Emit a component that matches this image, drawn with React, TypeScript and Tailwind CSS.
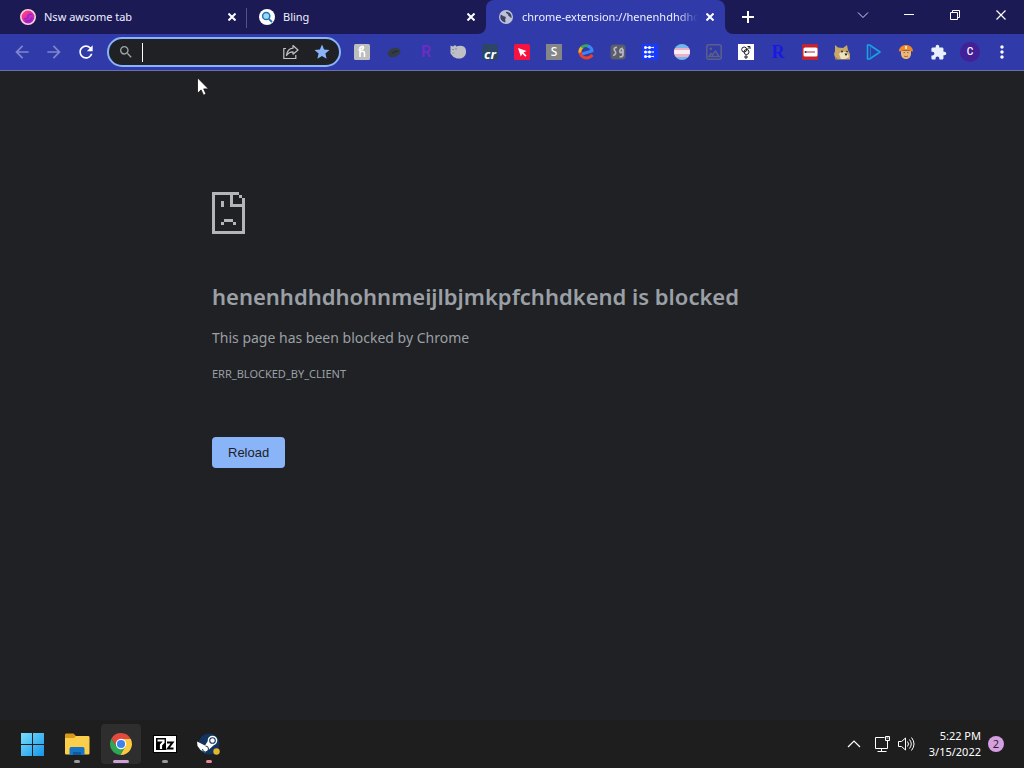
import type { ReactNode } from "react";
import {
  MdArrowBack,
  MdArrowForward,
  MdExtension,
  MdMoreVert,
  MdRefresh,
  MdSearch,
  MdStar,
} from "react-icons/md";

const svgProps = { width: 16, height: 16, viewBox: "0 0 16 16", fill: "none" };

function Cross({ size = 8, width = 2 }: { size?: number; width?: number }) {
  return (
    <svg width={size} height={size} viewBox={`0 0 ${size} ${size}`} stroke="#fff" strokeWidth={width}>
      <path d={`M0.5 0.5 L${size - 0.5} ${size - 0.5} M${size - 0.5} 0.5 L0.5 ${size - 0.5}`} />
    </svg>
  );
}

function GlowIcon() {
  return (
    <svg {...svgProps}>
      <defs>
        <linearGradient id="glow" x1="0" y1="0" x2="1" y2="1">
          <stop offset="0.2" stopColor="#ff3d8b" />
          <stop offset="1" stopColor="#8a1be0" />
        </linearGradient>
      </defs>
      <circle cx="8" cy="8" r="7.2" fill="url(#glow)" stroke="#fbd3d8" strokeWidth="1.6" />
      <path d="M4 9.5c2 .8 4-.2 4-2s2-3 4-2M5 11.8c3 .6 6-.6 7-3" stroke="#8a20d8" strokeWidth="1.3" />
    </svg>
  );
}

function BlingIcon() {
  return (
    <svg {...svgProps}>
      <circle cx="8" cy="8" r="8" fill="#fff" />
      <circle cx="7.2" cy="7" r="3.6" fill="#9ed8f5" stroke="#1c79b5" strokeWidth="1.5" />
      <path d="M9.8 9.8l3.2 3.2" stroke="#1c79b5" strokeWidth="1.8" />
    </svg>
  );
}

function GlobeIcon() {
  return (
    <svg {...svgProps} width={14} height={14}>
      <circle cx="8" cy="8" r="8" fill="#bcc3d6" />
      <path d="M2 5.5c1.500-.5 2.500 2 4.500 2 1.500 0 1.500 2 .5 3l.5 3.500C4 14 1.500 11 1.500 8zM8 2c-.5 1.500 1 2 2 2.500s0 2 1.500 2.500 1.500 2 2.800 2C15 5 12 2 8 2z" fill="#3c4468" />
    </svg>
  );
}

const extensions: { name: string; icon: ReactNode }[] = [
  {
    name: "Honey",
    icon: (
      <svg {...svgProps}>
        <rect width="16" height="16" rx="1.5" fill="#bebebe" />
        <path d="M6 3v10M6 9c1-2.500 4.500-2.500 4.500.5V13M4.500 5.500C6 6 9.500 5.500 9.500 3.500 9.500 2 7 2.500 6 4" stroke="#fff" strokeWidth="1.6" />
      </svg>
    ),
  },
  {
    name: "Leaf",
    icon: (
      <svg {...svgProps}>
        <ellipse cx="8" cy="8.5" rx="6.5" ry="4.5" transform="rotate(-18 8 8.5)" fill="#343c43" />
        <path d="M6 9.500c2-2 4-2.500 6-2.500" stroke="#262e32" strokeWidth="1.5" />
      </svg>
    ),
  },
  {
    name: "Purple R",
    icon: <span className="font-[Roboto,sans-serif] text-[16px] leading-4 font-medium text-[#702bc5]">R</span>,
  },
  {
    name: "Piggy",
    icon: (
      <svg {...svgProps}>
        <path d="M0.500 1.500l2.500 1L5 1l1.500 1.500c4.500-1.500 9-.5 9.500 4s-2 6.500-3 7l-2 1H7L3.500 13 0.500 9.500z" fill="#bfc0c6" />
        <path d="M2.500 5.500h1M5.500 5h1" stroke="#505468" />
        <path d="M2.500 9h2" stroke="#969aa8" />
      </svg>
    ),
  },
  {
    name: "cr",
    icon: (
      <span className="flex h-4 w-4 items-end justify-center rounded-sm bg-[#2b4765]">
        <span className="font-['Noto_Sans',sans-serif] text-[13px] leading-3 font-bold text-white italic">cr</span>
      </span>
    ),
  },
  {
    name: "Custom Cursor",
    icon: (
      <svg {...svgProps}>
        <rect width="16" height="16" rx="1.5" fill="#f5143f" />
        <path d="M4 4l8.500 3-3 1.500 3 3-1.200 1.200-3-3L6.800 12.500z" fill="#fff" />
      </svg>
    ),
  },
  {
    name: "S",
    icon: (
      <span className="flex h-4 w-4 items-center justify-center bg-[#858688] font-['Noto_Sans',sans-serif] text-[12px] leading-4 font-medium text-white">
        S
      </span>
    ),
  },
  {
    name: "Browser",
    icon: (
      <svg {...svgProps} strokeWidth="3">
        <path d="M2 9A6.200 6.200 0 0 1 4.500 3" stroke="#f1b51e" />
        <path d="M3.500 3.500A6.300 6.300 0 0 1 11.500 2.800" stroke="#35a853" />
        <path d="M9.500 2C13 3 14 5 14 7L4 10" stroke="#3b86f2" />
        <path d="M2 8.500c1 5.500 8 7.500 12.500 2.500" stroke="#e8402e" />
      </svg>
    ),
  },
  {
    name: "Stylus",
    icon: (
      <svg {...svgProps}>
        <rect x="0.5" y="0.5" width="15" height="15" rx="3" fill="#5b5d6b" />
        <path d="M7 3.500c-3-.5-3.500 2-2 3.500s.500 4-2 4.500M13 4.500c-3-.5-4 3-2.500 4s2.500-2 2.500-3.500v6c-.5 2-2 2-3.500 1.500" stroke="#b9bac0" strokeWidth="1.7" />
      </svg>
    ),
  },
  {
    name: "Slots",
    icon: (
      <svg {...svgProps}>
        <rect width="16" height="16" rx="1" fill="#163bff" />
        <path d="M4 3.500h8M4 8h8M4 12.500h8" stroke="#c9d8ff" />
        <g fill="#fff">
          <circle cx="3.5" cy="3.5" r="1.5" /><circle cx="7.5" cy="3.5" r="1.5" /><path d="M10 3.500l1.500-1v2z" />
          <circle cx="3.5" cy="8" r="1.5" /><circle cx="7.5" cy="8" r="1.5" /><path d="M10 8l1.500-1v2z" />
          <circle cx="3.5" cy="12.5" r="1.5" /><circle cx="7.5" cy="12.5" r="1.5" /><path d="M10 12.500l1.500-1v2z" />
        </g>
      </svg>
    ),
  },
  {
    name: "Flag",
    icon: (
      <svg {...svgProps}>
        <clipPath id="flag"><circle cx="8" cy="8" r="8" /></clipPath>
        <g clipPath="url(#flag)">
          <path d="M0 0h16v16H0z" fill="#71b7ed" />
          <path d="M0 4h16v9H0z" fill="#edb0c9" />
          <path d="M0 6h16v4H0z" fill="#f7edf2" />
        </g>
      </svg>
    ),
  },
  {
    name: "Image",
    icon: (
      <svg {...svgProps} stroke="#5b6088" strokeWidth="1.5">
        <rect x="0.8" y="0.8" width="14.4" height="14.4" rx="2" />
        <path d="M3 12.500h10L9.500 7 6.500 11 5 9.500z" />
        <circle cx="4.8" cy="4.8" r="0.6" />
      </svg>
    ),
  },
  {
    name: "Symbols",
    icon: (
      <svg {...svgProps} stroke="#20212a">
        <rect width="16" height="16" fill="#fff" stroke="none" />
        <circle cx="6.2" cy="5.500" r="2.500" />
        <circle cx="8.500" cy="8" r="2.500" />
        <path d="M8.500 6l3-3M9.500 2.500h2.500v2.500M8 10.500V15M6 13h4" />
      </svg>
    ),
  },
  {
    name: "Blue R",
    icon: <span className="font-['Liberation_Serif',serif] text-[18px] leading-4 font-bold text-[#1919e6]">R</span>,
  },
  {
    name: "Ticket",
    icon: (
      <svg {...svgProps}>
        <rect width="16" height="16" rx="1" fill="#c22432" />
        <rect x="1.5" y="3.5" width="14" height="9" rx="1.5" fill="#fff" />
        <path d="M3 8h10" stroke="#a52a40" />
        <circle cx="3.5" cy="8" r="1" fill="#403040" />
      </svg>
    ),
  },
  {
    name: "Doge",
    icon: (
      <svg {...svgProps}>
        <path d="M1 1l3 2.500L9 4l4-3 1 5 2 4v5.500H1.500L0 10 1 7z" fill="#c8a866" />
        <path d="M5 10c2-3 7-3 9 0l1 3-4 2H7z" fill="#eee2c2" />
        <path d="M1 12c1 2 3 3.500 6 3.500H2z" fill="#8d7549" />
        <circle cx="8" cy="7.5" r="0.9" fill="#25201b" />
        <circle cx="13" cy="7.5" r="0.8" fill="#25201b" />
        <path d="M10.500 9.500h3l-1 2h-1z" fill="#25201b" />
      </svg>
    ),
  },
  {
    name: "Player",
    icon: (
      <svg {...svgProps} strokeLinejoin="round">
        <path d="M1.500 1h2L14 8 3.500 15h-2z" stroke="#16a4e3" strokeWidth="1.6" />
        <path d="M4.500 2v12" stroke="#1676c9" />
      </svg>
    ),
  },
  {
    name: "Helmet",
    icon: (
      <svg {...svgProps}>
        <path d="M3 7h10v3c0 3-2.500 5-5 5s-5-2-5-5z" fill="#e9b878" />
        <path d="M1 7.500C1 3.500 4 1 8 1s7 2.500 7 6.500C12 6 4 6 1 7.500z" fill="#f08a28" />
        <path d="M7 2h2v3H7z" fill="#ffe2a4" />
        <path d="M5.500 8.500h1.500M9 8.500h1.500M6 12c1 .8 3 .8 4 0" stroke="#b0683a" />
      </svg>
    ),
  },
  { name: "Extensions", icon: <MdExtension size={17} className="text-[#eaf0ff]" /> },
  {
    name: "Profile",
    icon: (
      <span className="flex h-5 w-5 items-center justify-center rounded-full bg-[#432098] font-[Roboto,sans-serif] text-[10px] leading-5 font-medium text-white">
        C
      </span>
    ),
  },
  { name: "Menu", icon: <MdMoreVert size={20} className="text-white" /> },
];

const tabs = [
  { title: "Nsw awsome tab", icon: <GlowIcon />, active: false },
  { title: "Bling", icon: <BlingIcon />, active: false },
  { title: "chrome-extension://henenhdhdhohnmeijlbjmkpfchhdkend", icon: <GlobeIcon />, active: true },
];

function TabStrip() {
  return (
    <header className="flex h-[34px] bg-[#1c1a55] pl-2">
      <nav className="flex min-w-0 flex-1">
        {tabs.map((tab, i) => (
          <div
            key={tab.title}
            className={`relative flex max-w-[239px] min-w-0 flex-1 items-center pr-[7px] pl-3 ${
              tab.active ? "rounded-t-lg bg-[#303aa8]" : ""
            }`}
          >
            <span className="mr-2 flex w-4 shrink-0 justify-center">{tab.icon}</span>
            <a
              href="#"
              className={`min-w-0 flex-1 overflow-hidden text-[11px] leading-4 whitespace-nowrap text-[#eef0ff] ${
                tab.active ? "[mask-image:linear-gradient(to_right,#000_88%,transparent)]" : ""
              }`}
            >
              {tab.title}
            </a>
            <button type="button" aria-label={`Close ${tab.title}`} className="ml-1 flex h-4 w-4 shrink-0 items-center justify-center">
              <Cross size={8} />
            </button>
            {i === 0 && <span className="absolute top-2 right-0 h-5 w-px bg-[#54528a]" />}
            {tab.active && (
              <>
                <svg width="8" height="8" className="absolute bottom-0 -left-2"><path d="M8 0v8H0a8 8 0 0 0 8-8z" fill="#303aa8" /></svg>
                <svg width="8" height="8" className="absolute -right-2 bottom-0"><path d="M0 0v8h8a8 8 0 0 1-8-8z" fill="#303aa8" /></svg>
              </>
            )}
          </div>
        ))}
        <button type="button" aria-label="New tab" className="flex w-[46px] items-center justify-center">
          <svg width="12" height="12" stroke="#fff" strokeWidth="2"><path d="M6 0v12M0 6h12" /></svg>
        </button>
      </nav>
      <div className="flex h-[29px]">
        <button type="button" aria-label="Search tabs" className="flex w-[46px] items-center justify-center">
          <svg width="12" height="8" stroke="#d8d6f0" fill="none"><path d="M1 1.500l5 5 5-5" /></svg>
        </button>
        <button type="button" aria-label="Minimize" className="flex w-[46px] items-center justify-center">
          <svg width="10" height="1"><path d="M0 0h10v1H0z" fill="#fff" /></svg>
        </button>
        <button type="button" aria-label="Restore" className="flex w-[46px] items-center justify-center">
          <svg width="10" height="10" stroke="#fff" fill="none"><path d="M0.500 2.500h7v7h-7zM2.500 2.500v-2h7v7h-2" /></svg>
        </button>
        <button type="button" aria-label="Close window" className="flex w-[46px] items-center justify-center">
          <Cross size={10} width={1.2} />
        </button>
      </div>
    </header>
  );
}

function Toolbar() {
  return (
    <div className="flex h-[37px] items-center border-b border-[#686fae] bg-[#303aa8] pr-[6px] pl-2">
      <div className="flex gap-1 pr-[7px]">
        <button type="button" aria-label="Back" className="flex h-7 w-7 items-center justify-center text-[#7d86d0]">
          <MdArrowBack size={20} />
        </button>
        <button type="button" aria-label="Forward" className="flex h-7 w-7 items-center justify-center text-[#7d86d0]">
          <MdArrowForward size={20} />
        </button>
        <button type="button" aria-label="Reload this page" className="flex h-7 w-7 items-center justify-center text-white">
          <MdRefresh size={20} />
        </button>
      </div>
      <div className="mr-[5px] flex h-[30px] min-w-0 flex-1 items-center rounded-full border-2 border-[#8ab4f8] bg-[#202124] pr-[2px] pl-[9px]">
        <MdSearch size={16} className="shrink-0 text-[#a0a4a8]" />
        <span className="ml-2 h-[19px] w-px shrink-0 bg-white" />
        <input type="text" aria-label="Address and search bar" className="min-w-0 flex-1 bg-transparent text-[14px] text-white caret-transparent outline-none" />
        <button type="button" aria-label="Share" className="flex h-6 w-8 shrink-0 items-center justify-center">
          <svg {...svgProps} stroke="#bfc3c8" strokeWidth="1.2">
            <path d="M3 4.500H0.800v10h12V11" />
            <path d="M10 1.500l5 4.500-5 4.200V7.800C7 7.800 5 9 3.500 11.500 4 7 6.500 4.500 10 4.200z" strokeLinejoin="round" />
          </svg>
        </button>
        <button type="button" aria-label="Bookmark this tab" className="flex h-6 w-[30px] shrink-0 items-center justify-center text-[#8ab4f8]">
          <MdStar size={18} />
        </button>
      </div>
      <div className="flex">
        {extensions.map((ext) => (
          <button key={ext.name} type="button" aria-label={ext.name} className="flex h-7 w-8 items-center justify-center">
            {ext.icon}
          </button>
        ))}
      </div>
    </div>
  );
}

function SadPage() {
  return (
    <svg width="33" height="42" viewBox="0 0 11 14" shapeRendering="crispEdges" fill="#b4b5b7">
      <path d="M0 0h9v1H7v3h4v10H0zM1 1v12h9V5H6V1zM9 1h1v1H9zM10 2h1v2h-1zM3 3h1v2H3zM4 9h3v1H4zM3 10h1v1H3zM7 10h1v1H7z" fillRule="evenodd" />
    </svg>
  );
}

function ErrorPage() {
  return (
    <main className="flex-1 bg-[#202124] pt-[121px]">
      <div className="mx-auto max-w-[600px] text-[#9aa0a6]">
        <SadPage />
        <h1 className="mt-[46px] text-[22px] leading-8 font-semibold">
          henenhdhdhohnmeijlbjmkpfchhdkend is blocked
        </h1>
        <p className="mt-4 text-[14px] leading-5">This page has been blocked by Chrome</p>
        <p className="mt-4 text-[11px] leading-5">ERR_BLOCKED_BY_CLIENT</p>
        <button type="button" className="mt-[53px] h-[31px] rounded-sm bg-[#8ab4f8] px-4 font-['Liberation_Sans',sans-serif] text-[13px] text-[#202124]">
          Reload
        </button>
      </div>
    </main>
  );
}

const apps: { name: string; icon: ReactNode; mark?: string; open?: boolean }[] = [
  {
    name: "Start",
    icon: (
      <svg width="24" height="24" viewBox="0 0 24 24">
        <defs>
          <linearGradient id="win" x1="0" y1="0" x2="24" y2="24" gradientUnits="userSpaceOnUse">
            <stop stopColor="#7be0fb" />
            <stop offset="1" stopColor="#1393ea" />
          </linearGradient>
        </defs>
        <path d="M0 1h11v11H0zM12 1h11v11H12zM0 13h11v11H0zM12 13h11v11H12z" fill="url(#win)" />
      </svg>
    ),
  },
  {
    name: "File Explorer",
    mark: "w-[6px] bg-[#9a9a9a]",
    icon: (
      <svg width="26" height="24" viewBox="0 0 26 24">
        <path d="M1 3c0-1 .5-1.500 1.500-1.500h7L12 4v4H1z" fill="#d99a1c" />
        <path d="M1 6h9l2-2h12c1 0 1.500.5 1.500 1.500V21c0 1-.5 1.500-1.500 1.500H2.500C1.500 22.500 1 22 1 21z" fill="#fbcf4b" />
        <path d="M5.500 23v-6c0-1.500 1-2 2-2h11c1 0 2 .5 2 2v6z" fill="#1675c4" />
        <path d="M9 23v-3h8v3z" fill="#0e599f" />
      </svg>
    ),
  },
  {
    name: "Google Chrome",
    mark: "w-4 bg-[#cf9fd8]",
    open: true,
    icon: (
      <svg width="24" height="24" viewBox="0 0 24 24">
        <path d="M12 12l4.300 2.500L11.500 23A11 11 0 0 1 2.500 6.500L7.700 14.500z" fill="#2fa653" />
        <path d="M12 7h9.800a11 11 0 0 1-10.300 16l4.800-8.500z" fill="#fcca3f" />
        <path d="M2.500 6.500L7.700 14.500 12 7h9.800A11 11 0 0 0 2.500 6.500z" fill="#e04a3f" />
        <circle cx="12" cy="12" r="5.2" fill="#fff" />
        <circle cx="12" cy="12" r="4.1" fill="#3d83ef" />
      </svg>
    ),
  },
  {
    name: "7-Zip",
    mark: "w-[6px] bg-[#9a9a9a]",
    icon: (
      <svg width="24" height="18" viewBox="0 0 24 18" fill="none">
        <path d="M0 0h24v18H0z" fill="#000" />
        <path d="M1 1h22v16H1z" fill="#fff" />
        <path d="M3 3h10v12H3z" fill="#000" />
        <path d="M4.500 5.500h6v1.800L8 10v4" stroke="#fff" strokeWidth="2.2" />
        <path d="M14 7.500h5.500L15 13.500h5.500" stroke="#000" strokeWidth="2" />
      </svg>
    ),
  },
  {
    name: "Steam",
    mark: "w-[6px] bg-[#e58b95]",
    icon: (
      <svg width="24" height="24" viewBox="0 0 24 24">
        <circle cx="12" cy="12" r="10.500" fill="#12345f" />
        <path d="M0 9.500l8 4 3.500-5.500 5.500 5-5 4.500-4 3-4.500-2.500L0.500 14z" fill="#fff" />
        <circle cx="15.500" cy="8.500" r="4.800" fill="#fff" />
        <circle cx="15.500" cy="8.500" r="2.800" fill="#fff" stroke="#12345f" strokeWidth="1.1" />
        <path d="M5.500 17a3 3 0 1 0 3-3" fill="none" stroke="#12345f" />
        <circle cx="19.500" cy="19.500" r="3.200" fill="#e0b72d" />
      </svg>
    ),
  },
];

function Taskbar() {
  return (
    <footer className="flex h-12 items-center justify-between bg-[#1e1e1e] pr-5 pl-[13px] text-white">
      <div className="flex gap-1">
        {apps.map((app) => (
          <button
            key={app.name}
            type="button"
            aria-label={app.name}
            className={`relative flex h-10 w-10 items-center justify-center rounded ${app.open ? "bg-[#2e2e2e]" : ""}`}
          >
            {app.icon}
            {app.mark && (
              <span className="absolute inset-x-0 bottom-[1px] flex justify-center">
                <span className={`h-[3px] rounded-full ${app.mark}`} />
              </span>
            )}
          </button>
        ))}
      </div>
      <div className="flex items-center">
        <button type="button" aria-label="Show hidden icons" className="mr-3 flex h-6 w-4 items-center justify-center">
          <svg width="14" height="8" stroke="#fff" fill="none" strokeWidth="1.2"><path d="M1 7l6-6 6 6" /></svg>
        </button>
        <button type="button" aria-label="Network and volume" className="mr-[14px] flex items-center gap-[7px]">
          <svg width="17" height="16" viewBox="0 0 17 16" fill="none" stroke="#fff">
            <path d="M10.500 1.500H1.500v11h12V8M7.500 12.500v3M3.500 15.500h9M11.500 0.500h4v4h-4zM13.500 4.500V12M13 1.500v1M14 1.500v1" />
          </svg>
          <svg width="17" height="16" viewBox="0 0 17 16" fill="none" stroke="#fff">
            <path d="M0.500 5.500h3L7.500 2v12l-4-3.500h-3zM9.500 5.500q2 2.500 0 5M11.500 3.500q3.500 4.500 0 9M13.500 1.500q5 6.500 0 13" />
          </svg>
        </button>
        <button type="button" className="flex items-center gap-[7px]">
          <span className="text-right text-[11px] leading-4">
            <time className="block">5:22 PM</time>
            <time className="block">3/15/2022</time>
          </span>
          <span className="flex h-4 w-4 items-center justify-center rounded-full bg-[#d59fe0] text-[11px] leading-4 text-[#2b2030]">2</span>
        </button>
      </div>
    </footer>
  );
}

export default function App() {
  return (
    <div className="relative flex min-h-screen flex-col overflow-hidden bg-[#202124] font-['Noto_Sans','Open_Sans',sans-serif]">
      <TabStrip />
      <Toolbar />
      <ErrorPage />
      <Taskbar />
      <svg width="12" height="19" viewBox="0 0 12 19" className="pointer-events-none absolute top-[77px] left-[197px]">
        <path d="M0.500 0.800v15.500l3.600-3.400 2.400 5.300 2.500-1.100-2.300-5.200h4.800z" fill="#fff" stroke="#111" strokeWidth="0.8" />
      </svg>
    </div>
  );
}
